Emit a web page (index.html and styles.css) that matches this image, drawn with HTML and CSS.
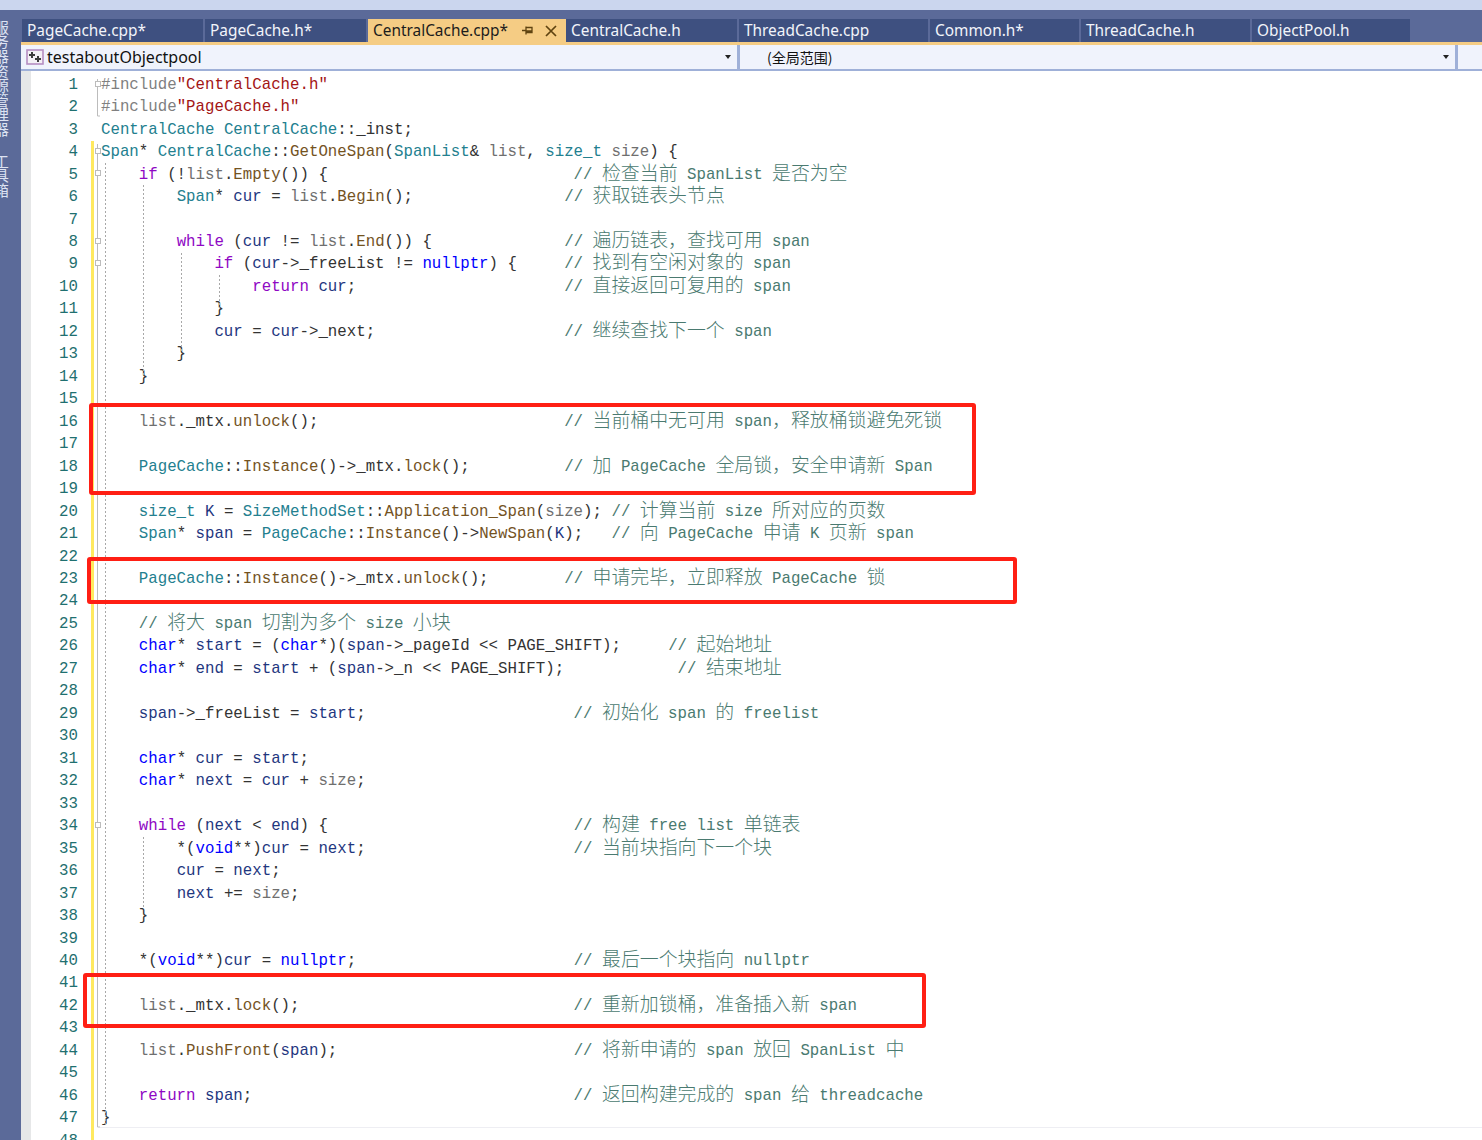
FILE: index.html
```html
<!DOCTYPE html>
<html lang="en">
    <head>
        <meta charset="utf-8">
        <title>CentralCache.cpp</title>
        <link rel="stylesheet" href="styles.css">
    </head>

    <body>
        <div class="top-strip"></div>

        <div class="shell">
            <div class="sidebar">
                <span class="side-label">服务器资源管理器</span>
                <span class="side-label">工具箱</span>
            </div>

            <div class="main">
                <div class="tabs">
                    <div class="tab">PageCache.cpp*</div>
                    <div class="tab">PageCache.h*</div>
                    <div class="tab active">
                        <span>CentralCache.cpp*</span>
                        <svg class="pin" width="11" height="11" viewBox="0 0 11 11"><path d="M0 5.5h4M4 1.5v8M4 2.5h6v5H4M4 6h6" fill="none" stroke="#5f4310" stroke-width="1.3"/></svg>
                        <svg class="close" width="12" height="12" viewBox="0 0 12 12"><path d="M1 1l10 10M11 1L1 11" fill="none" stroke="#5f4310" stroke-width="1.7"/></svg>
                    </div>
                    <div class="tab">CentralCache.h</div>
                    <div class="tab">ThreadCache.cpp</div>
                    <div class="tab">Common.h*</div>
                    <div class="tab">ThreadCache.h</div>
                    <div class="tab">ObjectPool.h</div>
                </div>
                <div class="gold-bar"></div>

                <div class="nav">
                    <div class="nav-project">
                        <svg class="project-icon" width="18" height="16" viewBox="0 0 18 16">
                            <rect x="1" y="1" width="16" height="14" fill="#f4f1f6" stroke="#b68ec2" stroke-width="1.6"/>
                            <path d="M6 3v6M3 6h6" stroke="#3c3c3c" stroke-width="2"/>
                            <path d="M12 7v6M9 10h6" stroke="#3c3c3c" stroke-width="2"/>
                        </svg>
                        <span>testaboutObjectpool</span>
                        <i class="arrow"></i>
                    </div>
                    <div class="nav-scope">
                        <span>(全局范围)</span>
                        <i class="arrow"></i>
                    </div>
                    <div class="nav-end"></div>
                </div>

                <div class="editor">
                    <div class="row"><span class="num">1</span><span class="mark"></span><span class="code"><span class="i">#include</span><span class="s">"CentralCache.h"</span></span></div>
                    <div class="row"><span class="num">2</span><span class="mark"></span><span class="code"><span class="i">#include</span><span class="s">"PageCache.h"</span></span></div>
                    <div class="row"><span class="num">3</span><span class="mark"></span><span class="code"><span class="t">CentralCache</span> <span class="t">CentralCache</span>::_inst;</span></div>
                    <div class="row chg"><span class="num">4</span><span class="mark"></span><span class="code"><span class="t">Span</span>* <span class="t">CentralCache</span>::<span class="f">GetOneSpan</span>(<span class="t">SpanList</span>&amp; <span class="p">list</span>, <span class="t">size_t</span> <span class="p">size</span>) {</span></div>
                    <div class="row chg"><span class="num">5</span><span class="mark"></span><span class="code">    <span class="k">if</span> (!<span class="p">list</span>.<span class="f">Empty</span>()) {                          <span class="c">// <span class="z">检查当前</span> SpanList <span class="z">是否为空</span></span></span></div>
                    <div class="row chg"><span class="num">6</span><span class="mark"></span><span class="code">        <span class="t">Span</span>* <span class="v">cur</span> = <span class="p">list</span>.<span class="f">Begin</span>();                <span class="c">// <span class="z">获取链表头节点</span></span></span></div>
                    <div class="row chg"><span class="num">7</span><span class="mark"></span><span class="code"></span></div>
                    <div class="row chg"><span class="num">8</span><span class="mark"></span><span class="code">        <span class="k">while</span> (<span class="v">cur</span> != <span class="p">list</span>.<span class="f">End</span>()) {              <span class="c">// <span class="z">遍历链表，查找可用</span> span</span></span></div>
                    <div class="row chg"><span class="num">9</span><span class="mark"></span><span class="code">            <span class="k">if</span> (<span class="v">cur</span>-&gt;_freeList != <span class="b">nullptr</span>) {     <span class="c">// <span class="z">找到有空闲对象的</span> span</span></span></div>
                    <div class="row chg"><span class="num">10</span><span class="mark"></span><span class="code">                <span class="k">return</span> <span class="v">cur</span>;                      <span class="c">// <span class="z">直接返回可复用的</span> span</span></span></div>
                    <div class="row chg"><span class="num">11</span><span class="mark"></span><span class="code">            }</span></div>
                    <div class="row chg"><span class="num">12</span><span class="mark"></span><span class="code">            <span class="v">cur</span> = <span class="v">cur</span>-&gt;_next;                    <span class="c">// <span class="z">继续查找下一个</span> span</span></span></div>
                    <div class="row chg"><span class="num">13</span><span class="mark"></span><span class="code">        }</span></div>
                    <div class="row chg"><span class="num">14</span><span class="mark"></span><span class="code">    }</span></div>
                    <div class="row chg"><span class="num">15</span><span class="mark"></span><span class="code"></span></div>
                    <div class="row chg"><span class="num">16</span><span class="mark"></span><span class="code">    <span class="p">list</span>._mtx.<span class="f">unlock</span>();                          <span class="c">// <span class="z">当前桶中无可用</span> span<span class="z">，释放桶锁避免死锁</span></span></span></div>
                    <div class="row chg"><span class="num">17</span><span class="mark"></span><span class="code"></span></div>
                    <div class="row chg"><span class="num">18</span><span class="mark"></span><span class="code">    <span class="t">PageCache</span>::<span class="f">Instance</span>()-&gt;_mtx.<span class="f">lock</span>();          <span class="c">// <span class="z">加</span> PageCache <span class="z">全局锁，安全申请新</span> Span</span></span></div>
                    <div class="row chg"><span class="num">19</span><span class="mark"></span><span class="code"></span></div>
                    <div class="row chg"><span class="num">20</span><span class="mark"></span><span class="code">    <span class="t">size_t</span> <span class="v">K</span> = <span class="t">SizeMethodSet</span>::<span class="f">Application_Span</span>(<span class="p">size</span>); <span class="c">// <span class="z">计算当前</span> size <span class="z">所对应的页数</span></span></span></div>
                    <div class="row chg"><span class="num">21</span><span class="mark"></span><span class="code">    <span class="t">Span</span>* <span class="v">span</span> = <span class="t">PageCache</span>::<span class="f">Instance</span>()-&gt;<span class="f">NewSpan</span>(<span class="v">K</span>);   <span class="c">// <span class="z">向</span> PageCache <span class="z">申请</span> K <span class="z">页新</span> span</span></span></div>
                    <div class="row chg"><span class="num">22</span><span class="mark"></span><span class="code"></span></div>
                    <div class="row chg"><span class="num">23</span><span class="mark"></span><span class="code">    <span class="t">PageCache</span>::<span class="f">Instance</span>()-&gt;_mtx.<span class="f">unlock</span>();        <span class="c">// <span class="z">申请完毕，立即释放</span> PageCache <span class="z">锁</span></span></span></div>
                    <div class="row chg"><span class="num">24</span><span class="mark"></span><span class="code"></span></div>
                    <div class="row chg"><span class="num">25</span><span class="mark"></span><span class="code">    <span class="c">// <span class="z">将大</span> span <span class="z">切割为多个</span> size <span class="z">小块</span></span></span></div>
                    <div class="row chg"><span class="num">26</span><span class="mark"></span><span class="code">    <span class="b">char</span>* <span class="v">start</span> = (<span class="b">char</span>*)(<span class="v">span</span>-&gt;_pageId &lt;&lt; PAGE_SHIFT);     <span class="c">// <span class="z">起始地址</span></span></span></div>
                    <div class="row chg"><span class="num">27</span><span class="mark"></span><span class="code">    <span class="b">char</span>* <span class="v">end</span> = <span class="v">start</span> + (<span class="v">span</span>-&gt;_n &lt;&lt; PAGE_SHIFT);            <span class="c">// <span class="z">结束地址</span></span></span></div>
                    <div class="row chg"><span class="num">28</span><span class="mark"></span><span class="code"></span></div>
                    <div class="row chg"><span class="num">29</span><span class="mark"></span><span class="code">    <span class="v">span</span>-&gt;_freeList = <span class="v">start</span>;                      <span class="c">// <span class="z">初始化</span> span <span class="z">的</span> freelist</span></span></div>
                    <div class="row chg"><span class="num">30</span><span class="mark"></span><span class="code"></span></div>
                    <div class="row chg"><span class="num">31</span><span class="mark"></span><span class="code">    <span class="b">char</span>* <span class="v">cur</span> = <span class="v">start</span>;</span></div>
                    <div class="row chg"><span class="num">32</span><span class="mark"></span><span class="code">    <span class="b">char</span>* <span class="v">next</span> = <span class="v">cur</span> + <span class="p">size</span>;</span></div>
                    <div class="row chg"><span class="num">33</span><span class="mark"></span><span class="code"></span></div>
                    <div class="row chg"><span class="num">34</span><span class="mark"></span><span class="code">    <span class="k">while</span> (<span class="v">next</span> &lt; <span class="v">end</span>) {                          <span class="c">// <span class="z">构建</span> free list <span class="z">单链表</span></span></span></div>
                    <div class="row chg"><span class="num">35</span><span class="mark"></span><span class="code">        *(<span class="b">void</span>**)<span class="v">cur</span> = <span class="v">next</span>;                      <span class="c">// <span class="z">当前块指向下一个块</span></span></span></div>
                    <div class="row chg"><span class="num">36</span><span class="mark"></span><span class="code">        <span class="v">cur</span> = <span class="v">next</span>;</span></div>
                    <div class="row chg"><span class="num">37</span><span class="mark"></span><span class="code">        <span class="v">next</span> += <span class="p">size</span>;</span></div>
                    <div class="row chg"><span class="num">38</span><span class="mark"></span><span class="code">    }</span></div>
                    <div class="row chg"><span class="num">39</span><span class="mark"></span><span class="code"></span></div>
                    <div class="row chg"><span class="num">40</span><span class="mark"></span><span class="code">    *(<span class="b">void</span>**)<span class="v">cur</span> = <span class="b">nullptr</span>;                       <span class="c">// <span class="z">最后一个块指向</span> nullptr</span></span></div>
                    <div class="row chg"><span class="num">41</span><span class="mark"></span><span class="code"></span></div>
                    <div class="row chg"><span class="num">42</span><span class="mark"></span><span class="code">    <span class="p">list</span>._mtx.<span class="f">lock</span>();                             <span class="c">// <span class="z">重新加锁桶，准备插入新</span> span</span></span></div>
                    <div class="row chg"><span class="num">43</span><span class="mark"></span><span class="code"></span></div>
                    <div class="row chg"><span class="num">44</span><span class="mark"></span><span class="code">    <span class="p">list</span>.<span class="f">PushFront</span>(<span class="v">span</span>);                         <span class="c">// <span class="z">将新申请的</span> span <span class="z">放回</span> SpanList <span class="z">中</span></span></span></div>
                    <div class="row chg"><span class="num">45</span><span class="mark"></span><span class="code"></span></div>
                    <div class="row chg"><span class="num">46</span><span class="mark"></span><span class="code">    <span class="k">return</span> <span class="v">span</span>;                                  <span class="c">// <span class="z">返回构建完成的</span> span <span class="z">给</span> threadcache</span></span></div>
                    <div class="row chg"><span class="num">47</span><span class="mark"></span><span class="code">}</span></div>
                    <div class="row chg"><span class="num">48</span><span class="mark"></span><span class="code"></span></div>

                    <!-- outlining margin and indent guides, drawn over the rows -->
                    <svg class="guides" width="1461" height="1069">
                        <g fill="none" stroke="#bcbcbc">
                            <path d="M76.5 8V45H79"/>
                            <path d="M76.5 73V1056H79"/>
                        </g>
                        <g fill="none" stroke="#a8a8a8" stroke-dasharray="2 2">
                            <path d="M84.5 92V1056"/>
                            <path d="M122.5 114V304"/>
                            <path d="M160.5 182V282"/>
                            <path d="M198.5 204V237"/>
                            <path d="M122.5 766V836"/>
                        </g>
                        <g fill="#fff" stroke="#bcbcbc">
                            <rect x="74.5" y="10.5" width="5" height="5"/>
                            <rect x="74.5" y="77.5" width="5" height="5"/>
                            <rect x="74.5" y="99.5" width="5" height="5"/>
                            <rect x="74.5" y="167.5" width="5" height="5"/>
                            <rect x="74.5" y="189.5" width="5" height="5"/>
                            <rect x="74.5" y="751.5" width="5" height="5"/>
                        </g>
                    </svg>
                    <div class="end-rule"></div>

                    <div class="note note-a"></div>
                    <div class="note note-b"></div>
                    <div class="note note-c"></div>
                </div>
            </div>
        </div>
    </body>
</html>
```

FILE: styles.css
```css
:root, body {
    width: 100%;
    height: 100%;
    margin: 0;
}

body {
    display: flex;
    flex-direction: column;
    overflow: hidden;
    background-color: #5b6a99;
    font-family: "Noto Sans", "Noto Sans CJK SC", sans-serif;
}

.top-strip {
    height: 10px;
    flex-shrink: 0;
    background-color: #cbd6ee;
}

.shell {
    display: flex;
    flex-grow: 1;
    min-height: 0;
}

.sidebar {
    width: 21px;
    flex-shrink: 0;
    display: flex;
    flex-direction: column;
    gap: 17px;
    padding-top: 10px;
    overflow: hidden;
}

/* the labels are cut by the left window edge */
.side-label {
    writing-mode: vertical-rl;
    align-self: flex-start;
    margin-left: -7px;
    font-size: 14.6px;
    line-height: 16px;
    color: #dde3f3;
    font-family: "Noto Sans CJK SC", sans-serif;
}

.main {
    flex-grow: 1;
    min-width: 0;
    display: flex;
    flex-direction: column;
}

.tabs {
    display: grid;
    grid-template-columns: 181px 161px 196px 171px 189px 149px 169px 158px;
    gap: 2px;
    height: 23px;
    margin-top: 9px;
    margin-left: 1px;
    flex-shrink: 0;
}

.tab {
    display: flex;
    align-items: center;
    padding: 0 0 3px 5px;
    font-size: 15.4px;
    color: #f2f4fa;
    background-color: #3e5080;
}

.tab.active {
    height: 23px;
    margin-right: -2px;
    padding-top: 0;
    color: #1c1c1c;
    background-color: #f5cc84;
}

.pin {
    margin-left: 14px;
}

.close {
    margin-left: 12px;
}

.gold-bar {
    height: 3px;
    flex-shrink: 0;
    background-color: #f5cc84;
}

.nav {
    display: flex;
    height: 24px;
    flex-shrink: 0;
    background-color: #f0f3fc;
    border-bottom: 2px solid #9fb0d8;
    font-size: 16px;
    color: #111;
}

.nav-project, .nav-scope {
    display: flex;
    align-items: center;
    border-right: 3px solid #9fb0d8;
}

.nav-project {
    width: 711px;
    padding-left: 5px;
    gap: 3px;
}

.nav-scope {
    width: 688px;
    padding-left: 27px;
    font-size: 14px;
    font-family: "Noto Sans CJK SC", sans-serif;
}

.nav-end {
    flex-grow: 1;
}

.arrow {
    margin-left: auto;
    margin-right: 6px;
    border-left: 3px solid transparent;
    border-right: 3px solid transparent;
    border-top: 4px solid #222;
}

.editor {
    position: relative;
    flex-grow: 1;
    min-height: 0;
    overflow: hidden;
    padding-top: 2.7px;
    background: linear-gradient(to right, #e6e7e8 10px, #fff 10px);
    font-family: "Liberation Mono", "Noto Sans CJK SC", monospace;
    font-size: 15.75px;
    color: #333;
}

.row {
    display: flex;
    height: 22.47px;
    line-height: 22.47px;
}

.num {
    width: 57px;
    flex-shrink: 0;
    text-align: right;
    color: #1f7070;
}

.mark {
    width: 3px;
    flex-shrink: 0;
    margin-left: 13px;
}

.chg .mark {
    background-color: #ffe95f;
}

.code {
    margin-left: 7px;
    white-space: pre;
}

.t { color: #23808f; }
.f { color: #74531f; }
.k { color: #8f08c4; }
.b { color: #0000ff; }
.v { color: #1f377f; }
.p { color: #6f6f6f; }
.s { color: #a31515; }
.i { color: #808080; }
.c { color: #4a7a70; }

.z {
    font-family: "Noto Sans CJK SC", sans-serif;
    font-size: 18.9px;
    font-weight: 300;
    line-height: 0;
    vertical-align: -1px;
}

.guides {
    position: absolute;
    left: 0;
    top: 0;
    pointer-events: none;
}

.end-rule {
    position: absolute;
    left: 79px;
    right: 0;
    top: 1056px;
    height: 1px;
    background-color: #eeeef3;
}

.note {
    position: absolute;
    box-sizing: border-box;
    border: 4px solid #ff1f14;
    border-radius: 3px;
}

.note-a {
    left: 68px;
    top: 332px;
    width: 887px;
    height: 92px;
}

.note-b {
    left: 66px;
    top: 486px;
    width: 930px;
    height: 47px;
}

.note-c {
    left: 62px;
    top: 902px;
    width: 843px;
    height: 55px;
}
```
